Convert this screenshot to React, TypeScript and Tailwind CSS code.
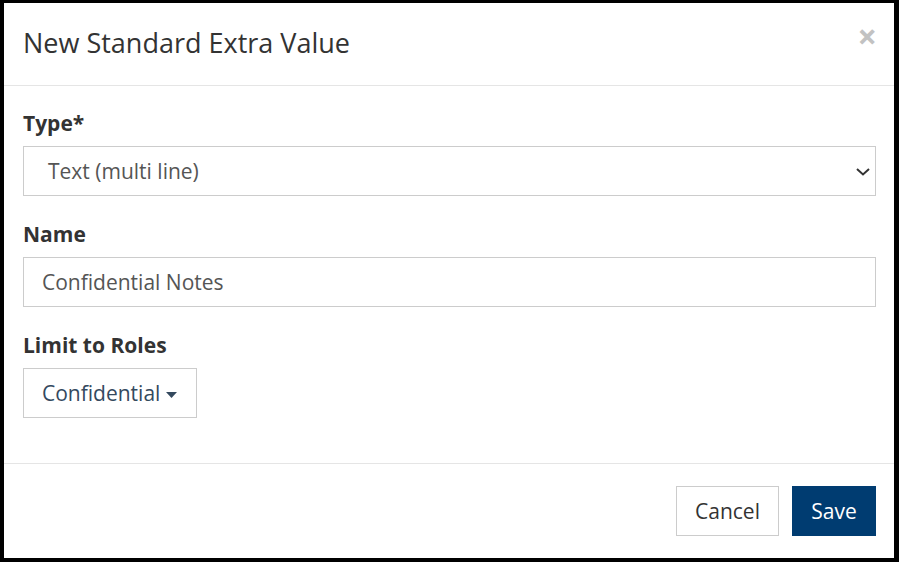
import React from "react"

function Chevron() {
  return (
    <svg width="14" height="8" viewBox="0 0 14 8" fill="none" className="mr-[5px]">
      <path d="M1 1l6 5.5L13 1" stroke="#333" strokeWidth="2" />
    </svg>
  )
}

function Caret() {
  return (
    <svg width="11" height="6" viewBox="0 0 11 6" className="ml-[6px] mt-[2px]">
      <path d="M0 0h11L5.5 6z" fill="#34495e" />
    </svg>
  )
}

export default function App() {
  return (
    <div
      className="w-[899px] h-[562px] bg-black pt-[3px] pl-[4px] pr-[5px] pb-[4px] box-border"
      style={{ fontFamily: '"Open Sans", "Liberation Sans", sans-serif' }}
    >
      <div className="w-full h-full bg-white flex flex-col text-[#333]">
        {/* Header */}
        <div className="flex items-start justify-between border-b border-[#e5e5e5] pl-[19px] pr-[17px] pt-[20px] pb-[23px]">
          <h4 className="text-[27px] leading-[39px] font-normal">New Standard Extra Value</h4>
          <span className="text-[34px] leading-[39px] font-bold text-[#c2c2c2] mt-[-6px]">×</span>
        </div>

        {/* Body */}
        <div className="flex-1 pl-[19px] pr-[18px] pt-[22px]">
          <div className="mb-[23px]">
            <label className="block text-[21px] leading-[30px] font-bold mb-[8px]">Type*</label>
            <div className="h-[50px] border border-[#ccc] flex items-center justify-between pl-[24px] pt-[2px] text-[21px] text-[#555]">
              <span>Text (multi line)</span>
              <Chevron />
            </div>
          </div>

          <div className="mb-[23px]">
            <label className="block text-[21px] leading-[30px] font-bold mb-[8px]">Name</label>
            <div className="h-[50px] border border-[#ccc] flex items-center pl-[18px] pt-[2px] text-[21px] text-[#555]">
              Confidential Notes
            </div>
          </div>

          <div>
            <label className="block text-[21px] leading-[30px] font-bold mb-[8px]">Limit to Roles</label>
            <div className="w-[174px] h-[50px] border border-[#ccc] flex items-center pl-[18px] pt-[2px] text-[21px] text-[#34495e]">
              <span>Confidential</span>
              <Caret />
            </div>
          </div>
        </div>

        {/* Footer */}
        <div className="border-t border-[#e5e5e5] flex justify-end gap-[13px] pr-[18px] pt-[22px] pb-[22px]">
          <button className="w-[103px] h-[50px] border border-[#ccc] bg-white pt-[2px] text-[21px] text-[#333]">Cancel</button>
          <button className="w-[84px] h-[50px] bg-[#003c71] pt-[2px] text-[21px] text-white">Save</button>
        </div>
      </div>
    </div>
  )
}
